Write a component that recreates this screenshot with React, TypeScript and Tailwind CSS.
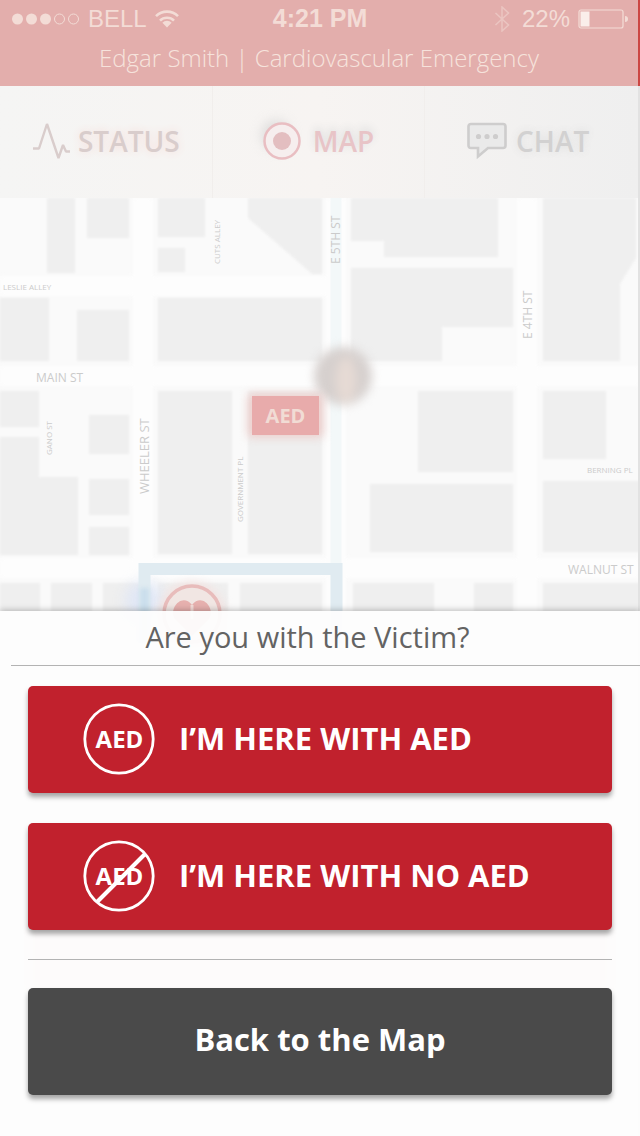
import type { ReactNode } from "react";

type Block = [x: number, y: number, w: number, h: number];

const BLOCKS: Block[] = [
  [47, 0, 28, 75],
  [87, 0, 42, 40],
  [158, 0, 47, 39],
  [158, 50, 27, 24],
  [0, 100, 49, 63],
  [77, 112, 52, 51],
  [158, 100, 164, 63],
  [0, 193, 39, 36],
  [89, 217, 40, 39],
  [158, 193, 74, 163],
  [248, 193, 74, 163],
  [89, 281, 40, 36],
  [89, 329, 40, 28],
  [418, 193, 95, 81],
  [543, 193, 63, 68],
  [370, 286, 143, 68],
  [543, 283, 97, 71],
  [0, 385, 40, 60],
  [51, 385, 41, 60],
  [103, 385, 40, 60],
  [158, 385, 70, 60],
  [240, 385, 82, 60],
  [353, 385, 81, 60],
  [474, 385, 39, 60],
  [543, 385, 97, 60],
];

const SHAPES = [
  "M248 0H322V76H312L248 20Z",
  "M351 0H498V59H384V43H351Z",
  "M351 70H513V129H442V163H351Z",
  "M543 0H636V60L620 86V163H543Z",
  "M0 239H39V279H78V357H0Z",
];

type Label = { text: string; x: number; y: number; size: number; vertical?: boolean };

const LABELS: Label[] = [
  { text: "LESLIE ALLEY", x: 3, y: 92, size: 8 },
  { text: "MAIN ST", x: 36, y: 184, size: 12 },
  { text: "BERNING PL", x: 587, y: 275, size: 8 },
  { text: "WALNUT ST", x: 568, y: 376, size: 12 },
  { text: "CUTS ALLEY", x: 220, y: 66, size: 8, vertical: true },
  { text: "E 5TH ST", x: 340, y: 66, size: 12, vertical: true },
  { text: "E 4TH ST", x: 532, y: 141, size: 12, vertical: true },
  { text: "GANO ST", x: 52, y: 257, size: 8, vertical: true },
  { text: "WHEELER ST", x: 149, y: 296, size: 13, vertical: true },
  { text: "GOVERNMENT PL", x: 243, y: 324, size: 8, vertical: true },
];

function StatusBar() {
  return (
    <div className="flex h-[38px] items-center justify-between pr-2.5 pl-3 font-['Liberation_Sans',sans-serif] text-2xl text-[#f3dcd6]">
      <div className="flex flex-1 items-center gap-2">
        <svg width="68" height="14" viewBox="0 0 68 14" aria-hidden="true">
          {[5.5, 19.5, 33.5].map((x) => (
            <circle key={x} cx={x} cy="7" r="5.5" fill="currentColor" />
          ))}
          {[47.5, 61.5].map((x) => (
            <circle key={x} cx={x} cy="7" r="5" fill="none" stroke="currentColor" />
          ))}
        </svg>
        <span>BELL</span>
        <svg width="24" height="18" viewBox="0 0 24 18" aria-hidden="true">
          <g fill="none" stroke="currentColor" strokeWidth="2.6">
            <path d="M1 6.2a15.6 15.6 0 0 1 22 0" />
            <path d="M5 10.6a10 10 0 0 1 14 0" />
          </g>
          <path d="M12 17.5l-4.6-4.8a6.6 6.6 0 0 1 9.2 0z" fill="currentColor" />
        </svg>
      </div>
      <span className="text-[25px] font-bold">4:21 PM</span>
      <div className="flex flex-1 items-center justify-end gap-2">
        <svg className="mr-1 opacity-50" width="16" height="26" viewBox="0 0 16 26" aria-hidden="true">
          <path d="M1.5 7l13 12L8 25V1l6.5 6-13 12" fill="none" stroke="currentColor" strokeWidth="1.5" />
        </svg>
        <span>22%</span>
        <svg width="50" height="20" viewBox="0 0 50 20" aria-hidden="true">
          <rect x="1" y="1" width="44" height="18" rx="2" fill="none" stroke="currentColor" strokeWidth="1.2" />
          <rect x="2.5" y="2.5" width="9" height="15" fill="#faeeea" />
          <path d="M47 7a3 3 0 0 1 0 6z" fill="currentColor" />
        </svg>
      </div>
    </div>
  );
}

function Tab({ icon, label, className }: { icon: ReactNode; label: string; className: string }) {
  return (
    <button
      type="button"
      className={`flex items-center justify-center pb-0.5 text-[28px] leading-10 font-semibold ${className}`}
    >
      {icon}
      {label}
    </button>
  );
}

function Tabs() {
  return (
    <nav className="grid h-28 grid-cols-3 border-r-2 border-[#e2e2e2] bg-linear-to-r from-[#f5f5f4] via-[#f7f4f2] to-[#efefef]">
      <Tab
        label="STATUS"
        className="gap-2 border-r border-[#f1eeec] text-[#d9cdcc] [text-shadow:0_0_8px_#f5dcd8]"
        icon={
          <svg width="38" height="38" viewBox="0 0 38 38" aria-hidden="true">
            <path
              d="M1 26.500h6L15 2l11.500 34L31 23l3 6.500h4"
              fill="none"
              stroke="currentColor"
              strokeWidth="2.400"
              strokeLinejoin="bevel"
            />
          </svg>
        }
      />
      <Tab
        label="MAP"
        className="gap-3 border-r border-[#f1eeec] text-[#e8c4c7] [text-shadow:0_-3px_8px_#dadada]"
        icon={
          <svg className="overflow-visible" width="38" height="38" viewBox="0 0 38 38" aria-hidden="true">
            <circle cx="13" cy="13" r="15" fill="#cfcfcf" className="blur-[6px]" opacity="0.6" />
            <circle cx="19" cy="19" r="17.500" fill="#f6eeee" stroke="#e9bec2" strokeWidth="2.500" />
            <circle cx="19" cy="19" r="9" fill="#e3bec0" />
          </svg>
        }
      />
      <Tab
        label="CHAT"
        className="gap-2 pr-2 text-[#d2d1d1] [text-shadow:0_0_8px_#dddddd]"
        icon={
          <svg width="42" height="40" viewBox="0 0 42 40" aria-hidden="true">
            <path
              d="M5 3h32q2.500 0 2.500 2.500v19q0 2.500-2.500 2.500H22L12 35.500V27H5q-2.500 0-2.500-2.500v-19Q2.500 3 5 3z"
              fill="#eaeaea"
              stroke="#cecdcd"
              strokeWidth="2.600"
            />
            {[12.5, 21, 29.5].map((x) => (
              <circle key={x} cx={x} cy="15.500" r="2.600" fill="#cecdcd" />
            ))}
          </svg>
        }
      />
    </nav>
  );
}

function StreetMap() {
  return (
    <svg
      className="block h-auto w-full bg-[#fafafa] font-['Open_Sans',sans-serif]"
      viewBox="0 0 640 938"
      role="img"
      aria-label="Street map"
    >
      <g fill="none" stroke="#fdfdfd" strokeWidth="20" className="blur-[2px]">
        <path d="M143 0V445M336 0V445M527 0V445" />
        <path d="M0 178H640M0 370H640M0 88H330" />
      </g>
      <g fill="#efefef" className="blur-[1px]">
        {BLOCKS.map(([x, y, w, h]) => (
          <rect key={`${x}-${y}`} x={x} y={y} width={w} height={h} />
        ))}
        {SHAPES.map((d) => (
          <path key={d} d={d} />
        ))}
      </g>
      <path d="M336 0V366" stroke="#f3f8f9" strokeWidth="11" />
      <ellipse cx="144" cy="402" rx="18" ry="19" fill="#dfe6f5" className="blur-[7px]" />
      <path d="M144.500 445V371H336.500V445" fill="none" stroke="#e0ebf1" strokeWidth="12" />
      <path d="M144.500 390V445" stroke="#cadeec" strokeWidth="9" className="blur-[2px]" />
      <g fill="#cbcbcb">
        {LABELS.map((l) => (
          <text
            key={l.text}
            x={l.x}
            y={l.y}
            fontSize={l.size}
            transform={l.vertical ? `rotate(-90 ${l.x} ${l.y})` : undefined}
          >
            {l.text}
          </text>
        ))}
      </g>
      <g className="blur-[5px]">
        <circle cx="343" cy="178" r="29" fill="#d6d0ce" />
        <ellipse cx="346" cy="182" rx="10" ry="23" fill="#e6dad4" />
      </g>
      <rect x="248" y="196" width="75" height="43" fill="#ecccc9" className="blur-[5px]" />
      <rect x="252" y="198" width="67" height="39" fill="#e8abab" />
      <text x="285.500" y="225" textAnchor="middle" fontSize="20" fontWeight="700" fill="#f1dcd5">
        AED
      </text>
      <circle cx="192" cy="417" r="33" fill="#f3e2e0" className="blur-[4px]" />
      <circle cx="192" cy="416" r="28" fill="#f1e6e3" stroke="#e8bcbb" strokeWidth="3.500" />
      <path
        d="M192 438l-17-17c-7-10 7-27 17-14c10-13 24 4 17 14z"
        fill="#e6b0ae"
      />
      <path d="M192 407v14" stroke="#f3dcd8" strokeWidth="3" />
      <path d="M639 0V938" stroke="#e2e2e2" strokeWidth="2" />
      <rect x="28" y="708" width="584" height="92" fill="#f6d6d2" className="blur-[8px]" />
    </svg>
  );
}

function AedBadge({ crossed = false }: { crossed?: boolean }) {
  return (
    <svg width="72" height="72" viewBox="0 0 72 72" aria-hidden="true">
      <circle cx="36" cy="36" r="34.200" fill="none" stroke="#fff" strokeWidth="2.800" />
      <text x="36.500" y="45" textAnchor="middle" fontSize="24" fontWeight="700" fill="#fff">
        AED
      </text>
      {crossed && <path d="M14 62L62 14" stroke="#fff" strokeWidth="4" />}
    </svg>
  );
}

function ChoiceButton({ label, crossed }: { label: string; crossed?: boolean }) {
  return (
    <button
      type="button"
      className="flex h-[107px] w-full items-center gap-6 rounded-[5px] bg-[#c1212d] pb-0.5 pl-[55px] text-left text-[31px] font-bold text-white shadow-[0_4px_5px_rgba(0,0,0,0.35)]"
    >
      <AedBadge crossed={crossed} />
      {label}
    </button>
  );
}

export default function App() {
  return (
    <div className="grid min-h-screen overflow-hidden bg-[#fafafa] font-['Open_Sans',sans-serif]">
      <div className="col-start-1 row-start-1">
        <header className="h-[86px] border-r-2 border-[#cb4743] bg-[#e3aeac]">
          <StatusBar />
          <p className="text-center text-2xl leading-10 font-light text-[#f6e3dc]">
            Edgar Smith | Cardiovascular Emergency
          </p>
        </header>
        <Tabs />
        <StreetMap />
      </div>

      <section
        role="dialog"
        aria-labelledby="prompt-title"
        className="z-10 col-start-1 row-start-1 self-end bg-[#fdfdfd]/95 pb-[41px] shadow-[0_-1px_6px_rgba(0,0,0,0.25)]"
      >
        <h2
          id="prompt-title"
          className="ml-[11px] h-[55px] border-b border-[#b3b3b3] pr-9 text-center text-[29px] leading-[52px] text-[#636363]"
        >
          Are you with the Victim?
        </h2>
        <div className="flex flex-col px-7 pt-5">
          <div className="flex flex-col gap-[30px]">
            <ChoiceButton label="I’M HERE WITH AED" />
            <ChoiceButton label="I’M HERE WITH NO AED" crossed />
          </div>
          <hr className="my-7 mt-[29px] border-[#b3b3b3]" />
          <button
            type="button"
            className="h-[107px] w-full rounded-[5px] bg-[#4a4a4a] pb-1 text-[31px] font-bold text-white shadow-[0_4px_5px_rgba(0,0,0,0.35)]"
          >
            Back to the Map
          </button>
        </div>
      </section>
    </div>
  );
}
